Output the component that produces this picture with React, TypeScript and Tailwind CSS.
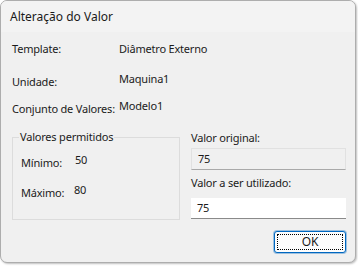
import React from 'react';

const font = { fontFamily: '"Noto Sans", "Open Sans", sans-serif' };

const App: React.FC = () => {
  return (
    <div className="w-[358px] h-[266px] bg-white text-[11px] leading-[16px] tracking-[-0.2px] text-[#1b1b1b]" style={font}>
      <div className="w-[356px] h-[263px] rounded-[7px] border border-[#adadad] shadow-[1px_1px_2px_rgba(0,0,0,0.25)] overflow-hidden flex flex-col bg-[#f0f0f0]">
        {/* title bar */}
        <div className="h-[31px] shrink-0 bg-[#f3f3f3] flex items-center pl-[9px] text-[12px] tracking-normal text-[#1a1a1a]">
          Alteração do Valor
        </div>

        <div className="flex flex-col pl-[11px] pt-[9px]">
          <div className="flex h-[16px]">
            <span className="w-[107px]">Template:</span>
            <span>Diâmetro Externo</span>
          </div>
          <div className="flex mt-[14px]">
            <span className="w-[107px] mt-[3px]">Unidade:</span>
            <span>Maquina1</span>
          </div>
          <div className="flex mt-[8px]">
            <span className="w-[107px] mt-[3px] whitespace-nowrap">Conjunto de Valores:</span>
            <span>Modelo1</span>
          </div>

          <div className="flex mt-[13px]">
            {/* group box */}
            <fieldset className="w-[168px] h-[91px] border border-[#dcdcdc] m-0 p-0 mt-[-1px]">
              <legend className="ml-[6px] px-[1px]">Valores permitidos</legend>
              <div className="flex flex-col pl-[8px]">
                <div className="flex mt-[7px]">
                  <span className="w-[54px] mt-[3px]">Mínimo:</span>
                  <span>50</span>
                </div>
                <div className="flex mt-[11px]">
                  <span className="w-[53px] mt-[3px]">Máximo:</span>
                  <span>80</span>
                </div>
              </div>
            </fieldset>

            {/* right column */}
            <div className="flex flex-col ml-[11px] w-[155px]">
              <span>Valor original:</span>
              <div className="mt-[2px] h-[22px] border border-[#e1e1e1] border-b-[#a9a9a9] bg-[#f0f0f0] flex items-center pl-[6px]">
                75
              </div>
              <span className="mt-[5px]">Valor a ser utilizado:</span>
              <div className="mt-[7px] h-[21px] bg-white border-b border-[#8a8a8a] flex items-center pl-[6px]">
                75
              </div>
              <div className="flex justify-end mt-[12px]">
                <button className="w-[72px] h-[22px] rounded-[3px] border border-[#0067c0] bg-[#fdfdfd] p-[2px] shadow-[0_0_0_1px_rgba(0,103,192,0.35)]">
                  <div className="h-full w-full border border-dotted border-black flex items-center justify-center text-[12px]">
                    OK
                  </div>
                </button>
              </div>
            </div>
          </div>
        </div>
      </div>
    </div>
  );
};

export default App;
